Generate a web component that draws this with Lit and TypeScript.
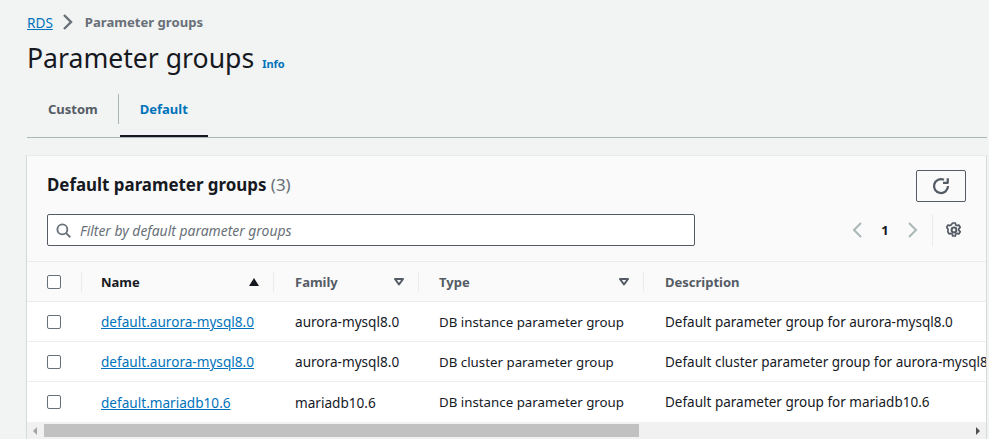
import { LitElement, html, css, svg } from "lit";
import { customElement } from "lit/decorators.js";

interface Row {
    name: string;
    family: string;
    type: string;
    description: string;
}

const ROWS: Row[] = [
    {
        name: "default.aurora-mysql8.0",
        family: "aurora-mysql8.0",
        type: "DB instance parameter group",
        description: "Default parameter group for aurora-mysql8.0",
    },
    {
        name: "default.aurora-mysql8.0",
        family: "aurora-mysql8.0",
        type: "DB cluster parameter group",
        description: "Default cluster parameter group for aurora-mysql8.0",
    },
    {
        name: "default.mariadb10.6",
        family: "mariadb10.6",
        type: "DB instance parameter group",
        description: "Default parameter group for mariadb10.6",
    },
];

const chevron = (dir: "left" | "right") => html`
    <svg width="16" height="16" viewBox="0 0 16 16" fill="none" stroke="currentColor" stroke-width="2">
        ${dir === "right"
            ? svg`<path d="M5 1 12 8 5 15" />`
            : svg`<path d="M11 1 4 8 11 15" />`}
    </svg>
`;

const filterCaret = html`
    <svg class="caret" width="10" height="8" viewBox="0 0 10 8">
        <path d="M1 1h8L5 6.5z" fill="none" stroke="#545b64" stroke-width="2" stroke-linejoin="round" />
    </svg>
`;

@customElement("app-root")
export class AppRoot extends LitElement {
    render() {
        return html`
            <div class="page">
                <nav class="crumbs">
                    <a href="#">RDS</a>
                    <span class="crumb-sep">${chevron("right")}</span>
                    <span class="crumb-current">Parameter groups</span>
                </nav>
                <div class="title">
                    <h1>Parameter groups</h1>
                    <a class="info" href="#">Info</a>
                </div>
                <div class="tabs">
                    <div class="tab">Custom</div>
                    <div class="tab-divider"></div>
                    <div class="tab active">Default</div>
                </div>
                <section class="card">
                    <div class="card-head">
                        <div class="head-top">
                            <h2>Default parameter groups <span class="count">(3)</span></h2>
                            <button class="refresh" aria-label="Refresh">
                                <svg width="18" height="18" viewBox="0 0 16 16" fill="none" stroke="#545b64" stroke-width="2">
                                    <path d="M14.2 8A6.2 6.2 0 1 1 10.6 2.4" />
                                    <path d="M14 1v4.2H9.8" stroke-linejoin="round" />
                                </svg>
                            </button>
                        </div>
                        <div class="head-tools">
                            <div class="filter">
                                <svg width="15" height="15" viewBox="0 0 16 16" fill="none" stroke="#687078" stroke-width="2">
                                    <circle cx="6.8" cy="6.8" r="5.3" />
                                    <path d="m10.8 10.8 4.4 4.4" />
                                </svg>
                                <span>Filter by default parameter groups</span>
                            </div>
                            <div class="pager">
                                <span class="pager-arrow">${chevron("left")}</span>
                                <span class="page-num">1</span>
                                <span class="pager-arrow">${chevron("right")}</span>
                                <span class="pager-sep"></span>
                                <svg class="gear" width="16" height="16" viewBox="0 0 16 16" fill="none" stroke="#545b64" stroke-width="2">
                                    <circle cx="8" cy="8" r="2.4" />
                                    <path stroke-width="1.7" stroke-linejoin="round" d="M6.7 1h2.6l.4 1.9 1.3.7 1.8-.6 1.4 2.3-1.4 1.3v1.8l1.4 1.3-1.4 2.3-1.8-.6-1.3.7-.4 1.9H6.7l-.4-1.9-1.3-.7-1.8.6-1.4-2.3L2 8.9V7.1L.6 5.3 2 3l1.8.6 1.3-.7z" />
                                </svg>
                            </div>
                        </div>
                    </div>
                    <div class="table-clip">
                        <table>
                            <colgroup>
                                <col class="c-check" />
                                <col class="c-name" />
                                <col class="c-family" />
                                <col class="c-type" />
                                <col class="c-desc" />
                            </colgroup>
                            <thead>
                                <tr>
                                    <th class="check"><span class="box"></span></th>
                                    <th class="sep sorted name">
                                        <div class="th-in">
                                            <span>Name</span>
                                            <svg class="caret" width="10" height="8" viewBox="0 0 10 8"><path d="M5 0 10 8H0z" fill="#16191f" /></svg>
                                        </div>
                                    </th>
                                    <th class="sep family"><div class="th-in"><span>Family</span>${filterCaret}</div></th>
                                    <th class="sep type"><div class="th-in"><span>Type</span>${filterCaret}</div></th>
                                    <th class="sep desc"><div class="th-in"><span>Description</span></div></th>
                                </tr>
                            </thead>
                            <tbody>
                                ${ROWS.map(
                                    (r) => html`
                                        <tr>
                                            <td class="check"><span class="box"></span></td>
                                            <td class="name"><a href="#">${r.name}</a></td>
                                            <td class="family">${r.family}</td>
                                            <td class="type">${r.type}</td>
                                            <td class="desc">${r.description}</td>
                                        </tr>
                                    `,
                                )}
                            </tbody>
                        </table>
                    </div>
                    <div class="hscroll">
                        <span class="arrow left"></span>
                        <div class="track"><div class="thumb"></div></div>
                        <span class="arrow right"></span>
                    </div>
                </section>
            </div>
        `;
    }

    static styles = css`
        :host {
            display: block;
            height: 439px;
            overflow: hidden;
            background: #f2f3f3;
            color: #16191f;
            font-family: "Noto Sans", "Open Sans", sans-serif;
            font-size: 13px;
        }
        a {
            color: #0073bb;
            text-decoration: underline;
        }
        .page {
            padding: 12px 2px 0 27px;
        }
        .crumbs {
            display: flex;
            align-items: center;
            height: 20px;
            font-size: 13.6px;
        }
        .crumb-sep {
            display: flex;
            color: #687078;
            margin: 0 10px 0 6px;
        }
        .crumb-sep svg {
            stroke-width: 2.4;
        }
        .crumb-current {
            font-weight: 700;
            font-size: 13.1px;
            color: #687078;
        }
        .title {
            display: flex;
            align-items: baseline;
            gap: 8px;
            margin-top: 8px;
            height: 36px;
        }
        h1 {
            margin: 0;
            font-size: 26.6px;
            font-weight: 400;
            line-height: 36px;
        }
        .info {
            font-size: 11px;
            font-weight: 700;
            text-decoration: none;
        }
        .tabs {
            display: flex;
            align-items: flex-start;
            height: 43px;
            margin-top: 18px;
            border-bottom: 1px solid #aab7b8;
        }
        .tab {
            box-sizing: border-box;
            padding: 0 20px 0 21px;
            line-height: 30px;
            font-weight: 700;
            color: #545b64;
        }
        .tab.active {
            color: #0073bb;
            margin-left: 1px;
            padding: 0 20px;
            border-bottom: 2px solid #16191f;
            height: 43px;
        }
        .tab-divider {
            width: 1px;
            height: 30px;
            background: #aab7b8;
        }
        .card {
            margin: 17px 0 0 -1px;
            background: #fff;
            border-left: 1px solid #d5dbdb;
            border-right: 1px solid #d5dbdb;
            border-top: 1px solid #e9ebed;
        }
        .card-head {
            background: #fafafa;
            padding: 14px 20px 0 20px;
            height: 106px;
            box-sizing: border-box;
            border-bottom: 1px solid #eaeded;
        }
        .head-top {
            display: flex;
            justify-content: space-between;
            align-items: flex-start;
        }
        h2 {
            margin: 3px 0 0;
            font-size: 16.9px;
            line-height: 24px;
            font-weight: 700;
        }
        .count {
            font-weight: 400;
            color: #687078;
        }
        .refresh {
            display: flex;
            align-items: center;
            justify-content: center;
            width: 50px;
            height: 32px;
            padding: 0;
            background: transparent;
            border: 1px solid #545b64;
            border-radius: 2px;
        }
        .head-tools {
            display: flex;
            align-items: center;
            justify-content: space-between;
            margin-top: 12px;
        }
        .filter {
            display: flex;
            align-items: center;
            gap: 9px;
            width: 648px;
            height: 32px;
            box-sizing: border-box;
            padding-left: 8px;
            background: #fff;
            border: 1px solid #545b64;
            border-radius: 2px;
            font-style: italic;
            font-size: 13.9px;
            color: #687078;
        }
        .pager {
            display: flex;
            align-items: center;
            height: 32px;
        }
        .pager-arrow {
            display: flex;
            color: #aab7b8;
        }
        .page-num {
            width: 38px;
            text-align: center;
            font-weight: 700;
        }
        .pager-sep {
            width: 1px;
            height: 32px;
            margin: 0 13px 0 12px;
            background: #e9ebed;
        }
        .gear {
            display: block;
            margin-right: 4px;
        }
        .table-clip {
            overflow: hidden;
        }
        table {
            table-layout: fixed;
            width: 1200px;
            border-collapse: collapse;
        }
        .c-check {
            width: 54px;
        }
        .c-name {
            width: 192px;
        }
        .c-family {
            width: 145px;
        }
        .c-type {
            width: 225px;
        }
        th {
            position: relative;
            height: 39px;
            padding: 0;
            background: #fafafa;
            border-bottom: 1px solid #eaeded;
            text-align: left;
            font-weight: 700;
            color: #545b64;
        }
        th.sorted {
            color: #16191f;
        }
        .th-in {
            display: flex;
            align-items: center;
            justify-content: space-between;
            padding-right: 14px;
        }
        th.sep::before {
            content: "";
            position: absolute;
            left: 0;
            top: 10px;
            height: 20px;
            width: 1px;
            background: #e9ebed;
        }
        .caret {
            display: block;
        }
        td {
            height: 39px;
            padding: 0;
            font-size: 13.6px;
            white-space: nowrap;
            border-bottom: 1px solid #eaeded;
        }
        tbody tr:last-child td {
            border-bottom: none;
            height: 40px;
        }
        td.type {
            font-size: 13.3px;
        }
        td.desc {
            font-size: 13.5px;
        }
        th.check,
        td.check {
            padding-left: 20px;
        }
        td.name,
        th.name .th-in {
            padding-left: 20px;
        }
        td.family,
        th.family .th-in {
            padding-left: 22px;
        }
        td.type,
        th.type .th-in {
            padding-left: 21px;
        }
        td.desc,
        th.desc .th-in {
            padding-left: 22px;
        }
        .box {
            display: block;
            width: 14px;
            height: 14px;
            box-sizing: border-box;
            background: #fff;
            border: 1px solid #687078;
            border-radius: 2px;
        }
        .hscroll {
            display: flex;
            align-items: stretch;
            height: 17px;
            background: #f1f1f1;
        }
        .arrow {
            flex: none;
            width: 17px;
            position: relative;
        }
        .arrow::after {
            content: "";
            position: absolute;
            top: 5px;
            border-top: 4px solid transparent;
            border-bottom: 4px solid transparent;
        }
        .arrow.left::after {
            left: 6px;
            border-right: 4px solid #a3a3a3;
        }
        .arrow.right::after {
            right: 6px;
            border-left: 4px solid #505050;
        }
        .track {
            flex: 1;
            padding-top: 2px;
        }
        .thumb {
            width: 595px;
            height: 13px;
            background: #c1c1c1;
        }
    `;
}

declare global {
    interface HTMLElementTagNameMap {
        "app-root": AppRoot;
    }
}
